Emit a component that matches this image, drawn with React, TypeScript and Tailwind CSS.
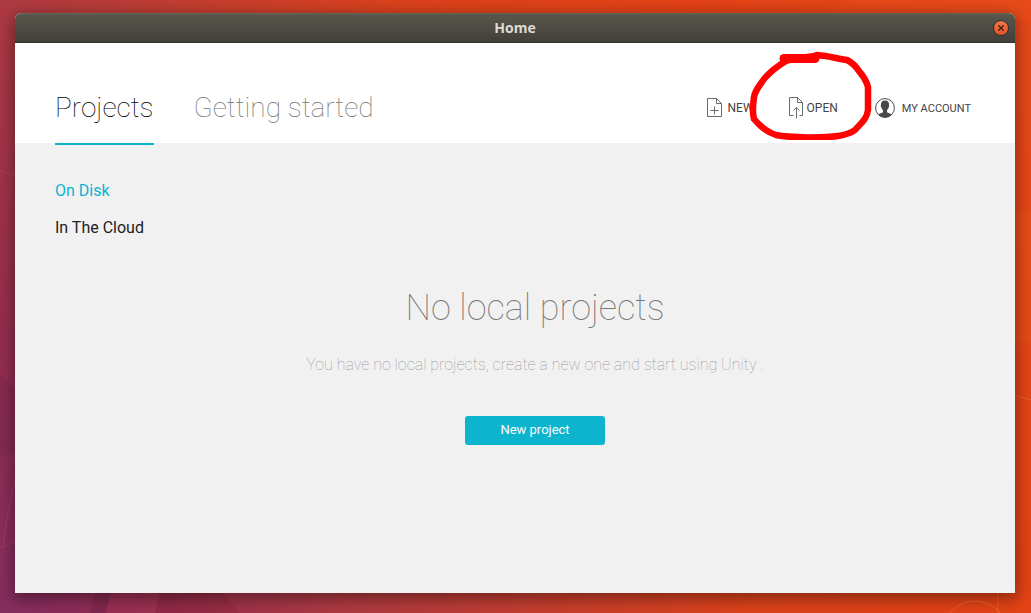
import React, { useState } from "react";

function Wallpaper() {
  return (
    <svg
      className="absolute inset-0 h-full w-full"
      viewBox="0 0 1031 613"
      preserveAspectRatio="none"
      fill="none"
      aria-hidden="true"
    >
      <path d="M0 375 L60 430 L0 458 Z" fill="#5e1f45" fillOpacity=".2" />
      <path d="M98 585 L112 585 L106 613 L90 613 Z" fill="#4a1533" fillOpacity=".2" />
      <path d="M112 585 L162 585 L155 613 L106 613 Z" fill="#b03a58" fillOpacity=".28" />
      <path d="M162 585 L215 585 L240 613 L155 613 Z" fill="#7a1c34" fillOpacity=".22" />
      <path d="M0 170 L15 176 M3 546 Q7 510 17 472 M0 548 L20 540" stroke="#d0507a" strokeOpacity=".35" />
      <path d="M1015 211 L1031 210 L1031 342 L1015 342 Z" fill="#f06a1c" fillOpacity=".15" />
      <path d="M1000 391 L1031 400 M998 580 V613" stroke="#f08030" strokeOpacity=".45" />
      <path d="M845 0 L1031 0 L1031 20 L830 20 Z" fill="#f06a1c" fillOpacity=".08" />
      <circle cx="975" cy="633" r="32" stroke="#f08030" strokeOpacity=".55" />
    </svg>
  );
}

function NewFileIcon() {
  return (
    <svg className="h-[20px] w-[15px]" viewBox="0 0 15 20" fill="none" stroke="#6a6a6a" strokeWidth="1" aria-hidden="true">
      <path d="M.5 .5 H9.5 L14.5 5.5 V18.5 H.5 Z M9.5 .5 V5.5 H14.5" />
      <path d="M7.5 8.5 V16.5 M3.5 12.5 H11.5" />
    </svg>
  );
}

function OpenFileIcon() {
  return (
    <svg className="h-[22px] w-[15px]" viewBox="0 0 15 22" fill="none" stroke="#6a6a6a" strokeWidth="1" aria-hidden="true">
      <path d="M4.5 18.5 H.5 V.5 H8.5 L13.5 5.5 V18.5 H10.5 M8.5 .5 V5.5 H13.5" />
      <path d="M7.5 21.5 V10.5 M4.5 13.5 L7.5 10.5 L10.5 13.5" />
    </svg>
  );
}

function AccountIcon() {
  return (
    <svg className="h-[20px] w-[20px]" viewBox="0 0 20 20" fill="none" aria-hidden="true">
      <circle cx="10" cy="10" r="9.4" stroke="#484848" />
      <path
        d="M10 2.5 C7 2.5 5.7 4.4 6 7.2 C5.5 7.5 5.9 9.3 6.5 9.6 C6.8 10.9 7.3 11.7 8 12.3 V14 C7.4 15.3 4.6 15.2 3.2 16.6 C5 18.6 7.5 19.4 10 19.4 C12.5 19.4 15 18.6 16.8 16.6 C15.4 15.2 12.6 15.3 12 14 V12.3 C12.7 11.7 13.2 10.9 13.5 9.6 C14.1 9.3 14.5 7.5 14 7.2 C14.3 4.4 13 2.5 10 2.5 Z"
        fill="#484848"
      />
    </svg>
  );
}

function Scribble() {
  return (
    <svg
      className="pointer-events-none absolute -top-[47px] -left-[41px] h-[90px] w-[126px]"
      viewBox="0 0 126 90"
      fill="none"
      stroke="#ff0202"
      strokeLinecap="round"
      strokeLinejoin="round"
      aria-hidden="true"
    >
      <path
        d="M66 6 C56 8 45 8 38 11 C28 17 22 22 16 29 C12 35 7 40 6 47 C5 54 4 62 6 69 C11 75 18 82 28 85 C42 88 76 88 90 86 C97 85 103 83 107 80 C113 73 119 69 120 60 V37 C118 29 115 26 111 21 C107 15 103 12 99 10 C90 9 82 6 69 5"
        strokeWidth="6.5"
      />
      <path d="M36 8.5 H67" strokeWidth="9" />
    </svg>
  );
}

const tabs = ["Projects", "Getting started"];
const places = ["On Disk", "In The Cloud"];

export default function App() {
  const [tab, setTab] = useState(tabs[0]);
  const [place, setPlace] = useState(places[0]);

  return (
    <div className="relative flex min-h-screen flex-col bg-[linear-gradient(61deg,#852d60_0%,#942d50_11%,#ae3a42_25%,#dc421c_54%,#e44216_75%,#e8491b_100%)] pt-[13px] pr-4 pb-5 pl-[15px] font-['Roboto',sans-serif]">
      <Wallpaper />
      <div className="relative flex grow flex-col overflow-hidden rounded-t-[6px] bg-[#f1f1f1] shadow-[0_4px_16px_2px_rgba(0,0,0,0.4)]">
        <div className="flex h-[30px] shrink-0 items-center border-t border-b border-t-[#67645a] border-b-[#33322e] bg-linear-to-b from-[#5a574d] to-[#403f3a] px-[6px]">
          <span className="w-4" />
          <h1 className="grow text-center font-['Open_Sans',sans-serif] text-[14px] leading-5 font-bold text-[#dfdbd2]">
            Home
          </h1>
          <button
            type="button"
            aria-label="Close"
            className="flex h-4 w-4 items-center justify-center rounded-full border border-[#33302b] bg-linear-to-b from-[#f3764e] to-[#e2521f]"
          >
            <svg className="h-[6px] w-[6px]" viewBox="0 0 6 6" stroke="#40200f" strokeWidth="1.3" aria-hidden="true">
              <path d="M.3 .3 L5.7 5.7 M5.7 .3 L.3 5.7" />
            </svg>
          </button>
        </div>

        <header className="flex h-[100px] shrink-0 justify-between bg-white pr-11 pl-10">
          <nav className="flex gap-10">
            {tabs.map((name) => (
              <button
                key={name}
                type="button"
                onClick={() => setTab(name)}
                className={
                  tab === name
                    ? "-mb-[2px] border-b-2 border-[#0cb4ce] pt-[30px] text-[28px] font-thin text-[#000]"
                    : "-mb-[2px] border-b-2 border-transparent pt-[30px] text-[28px] font-thin text-[#777]"
                }
              >
                {name}
              </button>
            ))}
          </nav>
          <div className="flex items-center pt-[30px] text-[12px] leading-4 text-[#444]">
            <button type="button" className="mr-[35px] flex items-center gap-[6px]">
              <NewFileIcon />
              NEW
            </button>
            <button type="button" className="relative mr-[37px] flex items-center gap-[3px]">
              <OpenFileIcon />
              OPEN
              <Scribble />
            </button>
            <button type="button" className="flex items-center gap-[7px] text-[11px]">
              <AccountIcon />
              <span className="pt-[2px]">MY ACCOUNT</span>
            </button>
          </div>
        </header>

        <main className="flex grow flex-col pt-9 pl-10">
          <nav className="flex flex-col items-start gap-[13px] text-[16px] leading-6">
            {places.map((name) => (
              <button
                key={name}
                type="button"
                onClick={() => setPlace(name)}
                className={place === name ? "text-[#0cb4ce]" : "text-[#222]"}
              >
                {name}
              </button>
            ))}
          </nav>
          <section className="flex flex-col items-center pt-11 text-center">
            <h2 className="text-[36px] leading-12 font-thin text-[#777]">No local projects</h2>
            <p className="mt-[21px] text-[16px] leading-6 font-thin text-[#999]">
              You have no local projects, create a new one and start using Unity .
            </p>
            <button
              type="button"
              className="mt-[39px] h-[29px] w-[140px] rounded-[3px] bg-[#0cb4ce] pb-[2px] text-[13px] leading-5 text-white"
            >
              New project
            </button>
          </section>
        </main>
      </div>
    </div>
  );
}
